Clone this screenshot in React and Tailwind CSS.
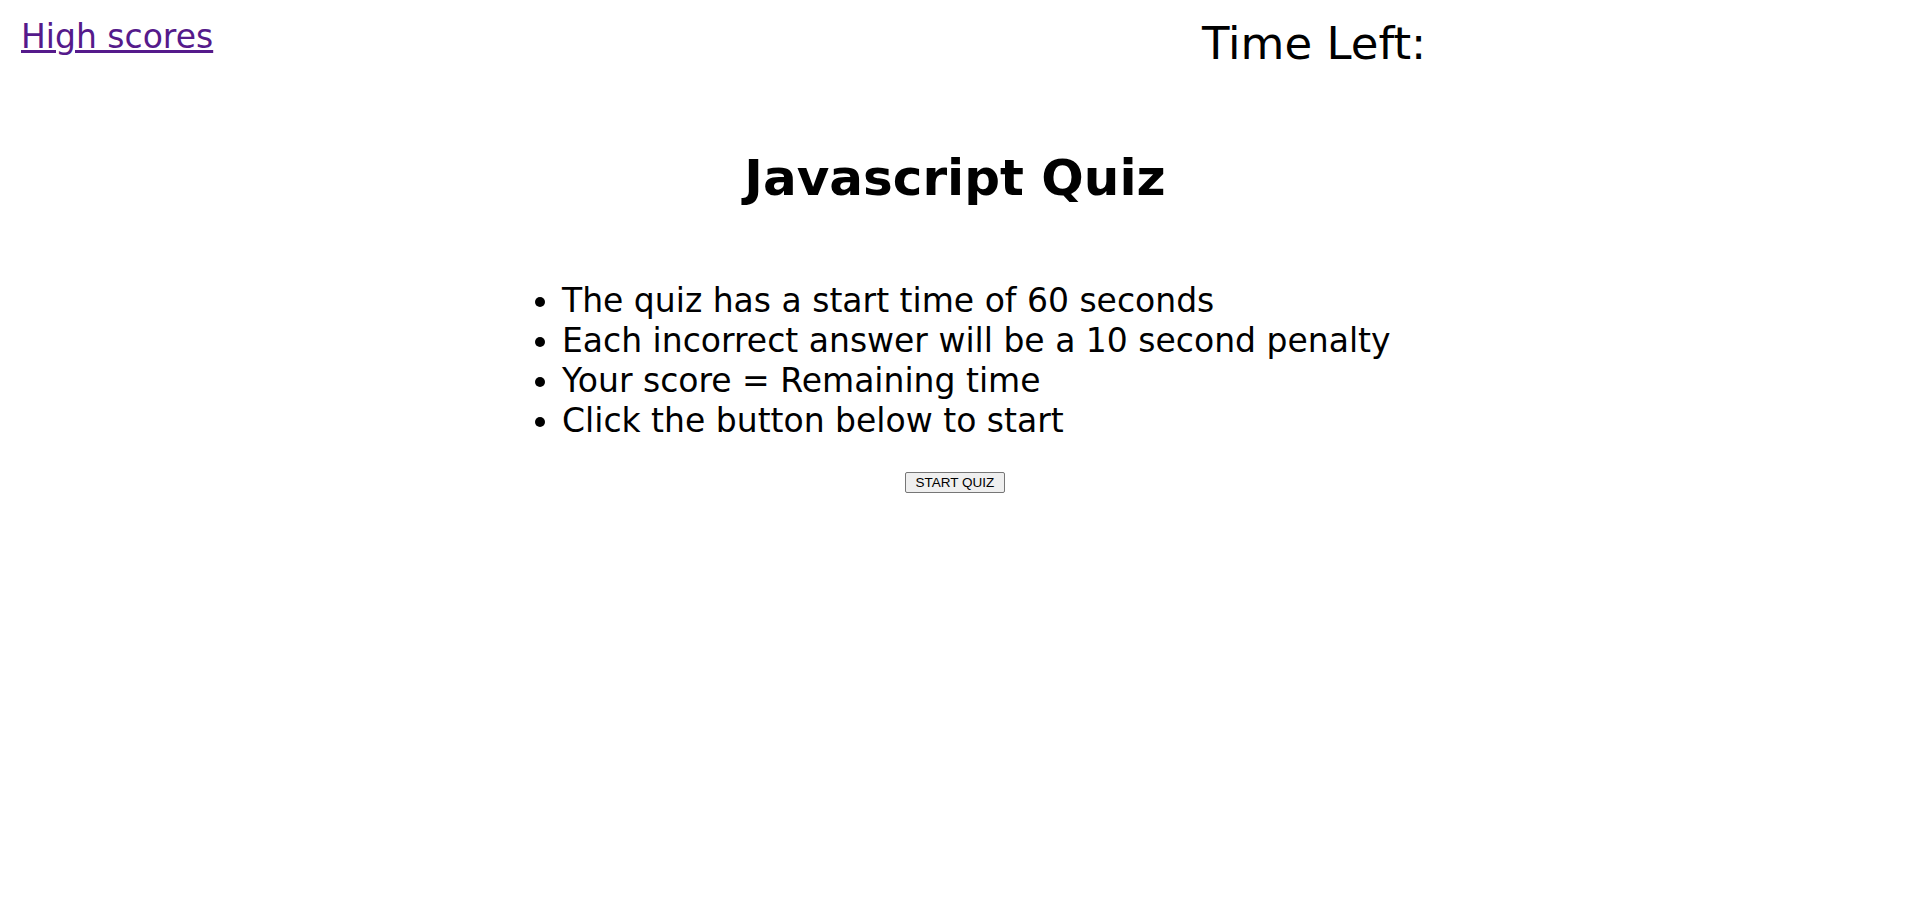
import React from "react";

const rules = [
  "The quiz has a start time of 60 seconds",
  "Each incorrect answer will be a 10 second penalty",
  "Your score = Remaining time",
  "Click the button below to start",
];

const App = () => {
  return (
    <div className="min-h-[917px] bg-white text-black font-['DejaVu_Sans',Verdana,sans-serif]">
      <header className="flex items-start">
        <div className="w-[1202px] shrink-0 pl-[21px] pt-[18px]">
          <a href="#" className="text-[33px] leading-[38px] text-[#551a8b] underline">
            High scores
          </a>
        </div>
        <div className="pt-[18px] text-[45px] leading-[52px]">Time Left:</div>
      </header>

      <main className="flex flex-col items-center">
        <h1 className="mt-[79px] text-[50px] leading-[58px] font-bold">Javascript Quiz</h1>

        <ul className="mt-[74px] w-full pl-[562px] list-disc text-[33px] leading-[40px]">
          {rules.map((rule) => (
            <li key={rule}>{rule}</li>
          ))}
        </ul>

        <button className="mt-[31px] h-[21px] px-[10px] border border-[#767676] rounded-[2px] bg-[#efefef] text-[13.5px] leading-[15px] font-['Liberation_Sans',Arial,sans-serif]">
          START QUIZ
        </button>
      </main>
    </div>
  );
};

export default App;
